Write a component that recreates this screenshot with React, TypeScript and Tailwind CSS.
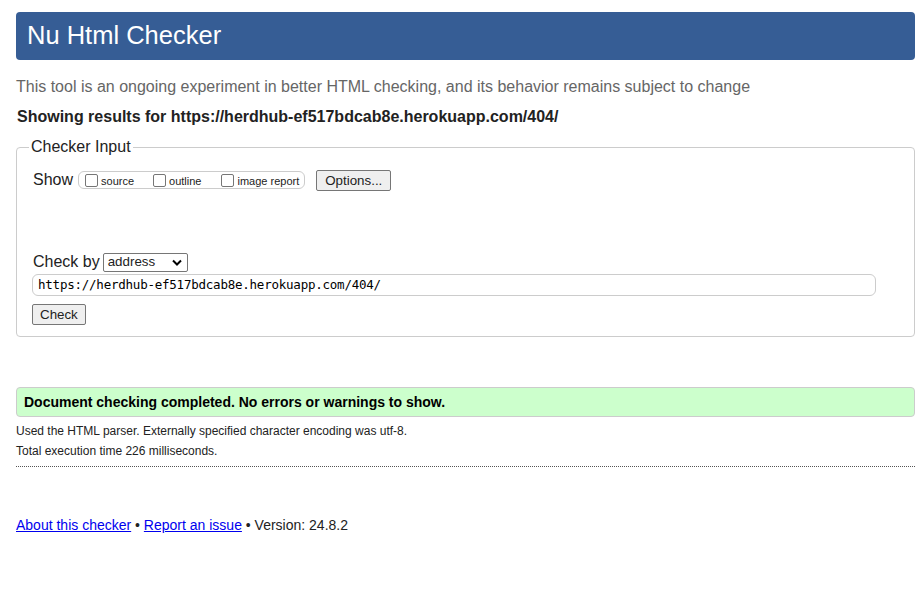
const url = 'https://herdhub-ef517bdcab8e.herokuapp.com/404/';

function Box({ label }: { label: string }) {
  return (
    <label className="flex items-center">
      <span className="w-[13px] h-[13px] border border-[#767676] rounded-[2px] bg-white mr-[3px]" />
      <span className="text-[11px] mt-[3px]">{label}</span>
    </label>
  );
}

export default function App() {
  return (
    <div className="bg-white min-h-screen pt-3 pl-4 pr-[2px] text-[#222] font-['Liberation_Sans',Arial,sans-serif]">
      <h1 className="bg-[#365d95] text-white text-[25.5px] leading-[46px] h-[48px] pl-[11px] rounded-[4px]">
        Nu Html Checker
      </h1>

      <p className="text-[#666] text-[16px] mt-[18px] leading-[18px]">
        This tool is an ongoing experiment in better HTML checking, and its behavior remains subject to change
      </p>
      <p className="font-bold text-[16px] mt-[12px] leading-[18px] pl-[1px]">
        Showing results for {url}
      </p>

      <fieldset className="mt-[12px] border border-[#ccc] rounded-[4px] pl-4 pr-[38px] pb-[12px] h-[199px]">
        <legend className="text-[16px] px-[2px] -ml-[4px] leading-[18px]">Checker Input</legend>
        <div className="flex items-center mt-[13px] h-[22px]">
          <span className="text-[16px] mr-[5px]">Show</span>
          <div className="flex items-center gap-[20px] border border-[#ccc] rounded-[6px] h-[18px] pl-[6px] pr-[5px]">
            <div className="flex items-center gap-[19px]">
              <Box label="source" />
              <Box label="outline" />
            </div>
            <Box label="image report" />
          </div>
          <button className="ml-[11px] text-[13.33px] h-[21px] px-[8px] border border-[#767676] rounded-[2px] bg-[#efefef]">
            Options...
          </button>
        </div>

        <div className="flex items-center mt-[61px] h-[20px]">
          <span className="text-[16px] mr-[3px]">Check by</span>
          <div className="flex items-center justify-between w-[85px] h-[19px] border border-[#767676] rounded-[2px] pl-[4px] pr-[5px] text-[13.33px]">
            <span>address</span>
            <svg width="10" height="7" viewBox="0 0 10 7">
              <path d="M1 1.5 L5 5.5 L9 1.5" stroke="#000" strokeWidth="2" fill="none" />
            </svg>
          </div>
        </div>

        <div className="mt-[2px] -ml-[1px] h-[22px] border border-[#ccc] rounded-[6px] flex items-center pl-[5px] font-['DejaVu_Sans_Mono',monospace] text-[12.5px] tracking-[-0.23px] text-black">
          {url}
        </div>

        <button className="mt-[8px] -ml-[1px] text-[13.33px] h-[21px] px-[7px] border border-[#767676] rounded-[2px] bg-[#efefef] leading-none">
          Check
        </button>
      </fieldset>

      <div className="mt-[50px] h-[30px] bg-[#ccffcc] border border-[#ccc] rounded-[4px] flex items-center pl-[7px] font-bold text-[14px] text-black">
        Document checking completed. No errors or warnings to show.
      </div>

      <p className="text-[12px] mt-[7px] leading-[14px]">Used the HTML parser. Externally specified character encoding was utf-8.</p>
      <p className="text-[12px] mt-[6px] leading-[14px]">Total execution time 226 milliseconds.</p>
      <hr className="mt-[8px] border-0 border-t border-dotted border-[#555]" />

      <p className="mt-[50px] text-[14px] leading-[16px]">
        <a href="#" className="text-[#0000ee] underline">About this checker</a>
        {' • '}
        <a href="#" className="text-[#0000ee] underline">Report an issue</a>
        {' • Version: 24.8.2'}
      </p>
    </div>
  );
}
